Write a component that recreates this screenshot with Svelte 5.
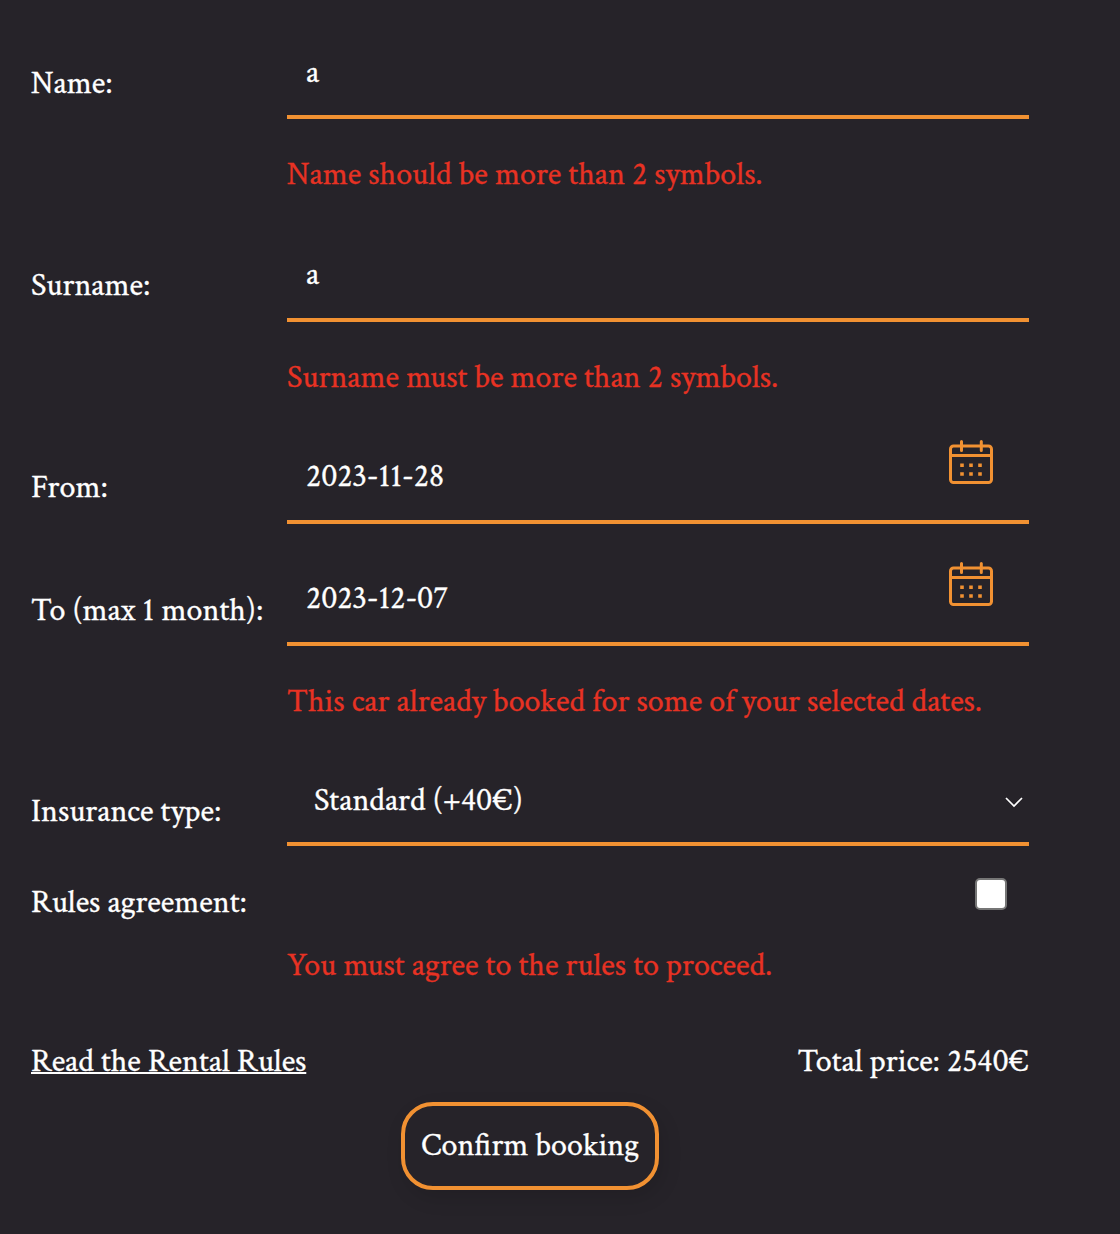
<script>
  const fields = [
    { id: 'name', label: 'Name:', value: 'a', error: 'Name should be more than 2 symbols.' },
    { id: 'surname', label: 'Surname:', value: 'a', error: 'Surname must be more than 2 symbols.' },
    { id: 'from', label: 'From:', value: '2023-11-28', date: true },
    { id: 'to', label: 'To (max 1 month):', value: '2023-12-07', date: true, error: 'This car already booked for some of your selected dates.' },
    { id: 'insurance', label: 'Insurance type:', value: 'Standard (+40€)', select: true }
  ];
</script>

<form class="booking">
  {#each fields as f}
    <div class="row {f.id}">
      <div class="label"><span class="t">{f.label}</span></div>
      <div class="control">
        <span class="value t">{f.value}</span>
        {#if f.date}
          <svg class="calendar" viewBox="0 0 44 45" fill="none" stroke="#f19132" stroke-width="3">
            <rect x="1.5" y="6" width="41" height="36.5" rx="3" />
            <path d="M1.5 15.5h41" />
            <path d="M12.5 1.5v9M32.3 1.5v9" stroke-linecap="round" />
            <path d="M11.2 25.3h3.6M20.2 25.3h3.6M29.2 25.3h3.6M11.2 34h3.6M20.2 34h3.6M29.2 34h3.6" stroke-width="3.6" />
          </svg>
        {/if}
        {#if f.select}
          <svg class="chevron" viewBox="0 0 18 11" fill="none" stroke="#fff" stroke-width="1.7"><path d="M1 1 9 9 17 1" /></svg>
        {/if}
      </div>
    </div>
    {#if f.error}
      <p class="error {f.id}-error"><span class="t">{f.error}</span></p>
    {/if}
  {/each}
  <div class="rules">
    <span class="rules-label t">Rules agreement:</span>
    <span class="check" role="checkbox" aria-checked="false" aria-label="Rules agreement" tabindex="0"></span>
  </div>
  <p class="error rules-error"><span class="t">You must agree to the rules to proceed.</span></p>
  <div class="foot">
    <span class="link t">Read the Rental Rules</span>
    <span class="total t">Total price: 2540€</span>
  </div>
  <button type="button"><span class="t">Confirm booking</span></button>
</form>

<style>
  :global(body) { margin: 0; background: #262329; }
  .booking {
    box-sizing: border-box;
    width: 1120px;
    height: 1234px;
    padding: 39px 91px 0 31px;
    display: flex;
    flex-direction: column;
    color: #fff;
    font: 32px/44px 'Crimson Text', 'Liberation Serif', serif;
  }
  .t { white-space: nowrap; -webkit-text-stroke: 0.35px currentColor; }
  .row { display: grid; grid-template-columns: 256px 742px; height: 80px; flex: none; }
  .label { padding-top: 22px; }
  .control {
    box-sizing: border-box;
    height: 80px;
    border-bottom: 4px solid #f19132;
    padding: 11px 36px 0 19px;
    display: flex;
    justify-content: space-between;
    align-items: flex-start;
  }
  .name .label, .to .label { padding-top: 23px; }
  .name .control { padding-top: 12px; }
  .insurance .label { padding-top: 24px; }
  .insurance .control { padding: 13px 6px 0 27px; }
  .to { margin-top: 42px; }
  .calendar { width: 44px; height: 45px; margin-top: -15px; }
  .chevron { width: 18px; height: 11px; margin-top: 18px; }
  .error { margin: 34px 0 0 256px; height: 40px; color: #e83223; }
  .name-error { margin-bottom: 49px; }
  .surname-error { margin-bottom: 48px; }
  .to-error { margin-bottom: 46px; }
  .rules { display: flex; justify-content: space-between; height: 40px; margin-top: 35px; padding-right: 22px; }
  .check {
    box-sizing: border-box;
    width: 32px;
    height: 32px;
    margin-top: -3px;
    background: #fff;
    border: 2px solid #767676;
    border-radius: 5px;
  }
  .rules-error { margin-top: 23px; }
  .foot { display: flex; justify-content: space-between; margin-top: 56px; height: 40px; }
  .link { text-decoration: underline; text-decoration-thickness: 2px; text-underline-offset: 1px; text-decoration-skip-ink: none; }
  button {
    box-sizing: border-box;
    width: 258px;
    height: 88px;
    margin: 22px 0 0 370px;
    padding: 0;
    border: 4px solid #f19132;
    border-radius: 32px;
    background: transparent;
    color: #fff;
    font: inherit;
    box-shadow: 4px 8px 20px rgba(0, 0, 0, 0.12);
  }
</style>
